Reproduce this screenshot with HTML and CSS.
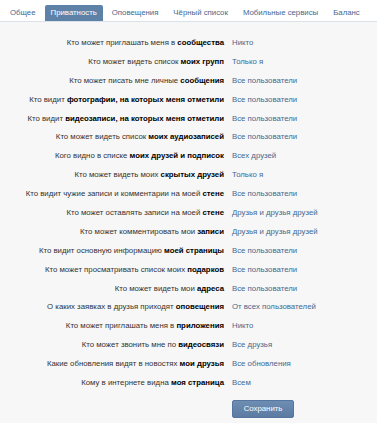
FILE: index.html
```html
<!DOCTYPE html>
<html lang="ru">
<head>
    <meta charset="UTF-8">
    <meta name="viewport" content="width=device-width, initial-scale=1.0">
    <link rel="stylesheet" href="styles.css">
    <title>Настройки приватности</title>
</head>
<body>
    <div class="tabs">
        <a class="tabs__item">Общее</a>
        <a class="tabs__item tabs__item--active">Приватность</a>
        <a class="tabs__item">Оповещения</a>
        <a class="tabs__item">Чёрный список</a>
        <a class="tabs__item">Мобильные сервисы</a>
        <a class="tabs__item">Баланс</a>
    </div>

    <div class="settings">
        <div class="settings__label">Кто может приглашать меня в <b>сообщества</b></div>
        <div class="settings__value">Никто</div>

        <div class="settings__label">Кто может видеть список <b>моих групп</b></div>
        <div class="settings__value">Только я</div>

        <div class="settings__label">Кто может писать мне личные <b>сообщения</b></div>
        <div class="settings__value">Все пользователи</div>

        <div class="settings__label">Кто видит <b>фотографии, на которых меня отметили</b></div>
        <div class="settings__value">Все пользователи</div>

        <div class="settings__label">Кто видит <b>видеозаписи, на которых меня отметили</b></div>
        <div class="settings__value">Все пользователи</div>

        <div class="settings__label">Кто может видеть список <b>моих аудиозаписей</b></div>
        <div class="settings__value">Все пользователи</div>

        <div class="settings__label">Кого видно в списке <b>моих друзей и подписок</b></div>
        <div class="settings__value">Всех друзей</div>

        <div class="settings__label">Кто может видеть моих <b>скрытых друзей</b></div>
        <div class="settings__value">Только я</div>

        <div class="settings__label">Кто видит чужие записи и комментарии на моей <b>стене</b></div>
        <div class="settings__value">Все пользователи</div>

        <div class="settings__label">Кто может оставлять записи на моей <b>стене</b></div>
        <div class="settings__value">Друзья и друзья друзей</div>

        <div class="settings__label">Кто может комментировать мои <b>записи</b></div>
        <div class="settings__value">Друзья и друзья друзей</div>

        <div class="settings__label">Кто видит основную информацию <b>моей страницы</b></div>
        <div class="settings__value">Все пользователи</div>

        <div class="settings__label">Кто может просматривать список моих <b>подарков</b></div>
        <div class="settings__value">Все пользователи</div>

        <div class="settings__label">Кто может видеть мои <b>адреса</b></div>
        <div class="settings__value">Все пользователи</div>

        <div class="settings__label">О каких заявках в друзья приходят <b>оповещения</b></div>
        <div class="settings__value">От всех пользователей</div>

        <div class="settings__label">Кто может приглашать меня в <b>приложения</b></div>
        <div class="settings__value">Никто</div>

        <div class="settings__label">Кто может звонить мне по <b>видеосвязи</b></div>
        <div class="settings__value">Все друзья</div>

        <div class="settings__label">Какие обновления видят в новостях <b>мои друзья</b></div>
        <div class="settings__value">Все обновления</div>

        <div class="settings__label">Кому в интернете видна <b>моя страница</b></div>
        <div class="settings__value">Всем</div>

        <div class="settings__actions">
            <button class="button">Сохранить</button>
        </div>
    </div>
</body>
</html>
```

FILE: styles.css
```css
*{box-sizing: border-box; font-family: "Liberation Sans", Arial, sans-serif;}

body{margin: 0; background: #fff; font-size: 7.8px;}

.tabs{display: flex; gap: 3px; padding: 5px 0 0 4px; border-bottom: 1px solid #dae1e8; background: #fff; white-space: nowrap; overflow: hidden;}
.tabs__item{flex-shrink: 0; padding: 0 6px; line-height: 16px; color: #45688e; border-radius: 2px 2px 0 0; cursor: pointer;}
.tabs__item--active{background: #5e81a8; color: #fff;}

.settings{display: grid; grid-template-columns: 224px 1fr; column-gap: 8px; grid-auto-rows: 18.9px; align-items: center; padding: 11px 0 12px; background: #f7f7f7;}
.settings__label{text-align: right; color: #333; white-space: nowrap;}
.settings__label b{color: #000;}
.settings__value{color: #45688e; white-space: nowrap;}

.settings__actions{grid-column: 2; margin-top: 15px;}
.button{width: 62px; height: 18px; padding: 0; border: 1px solid #5676a0; border-radius: 2px; background: linear-gradient(#6d8db3, #5b7ba2); color: #fff; font-size: 7.8px; cursor: pointer;}
```
